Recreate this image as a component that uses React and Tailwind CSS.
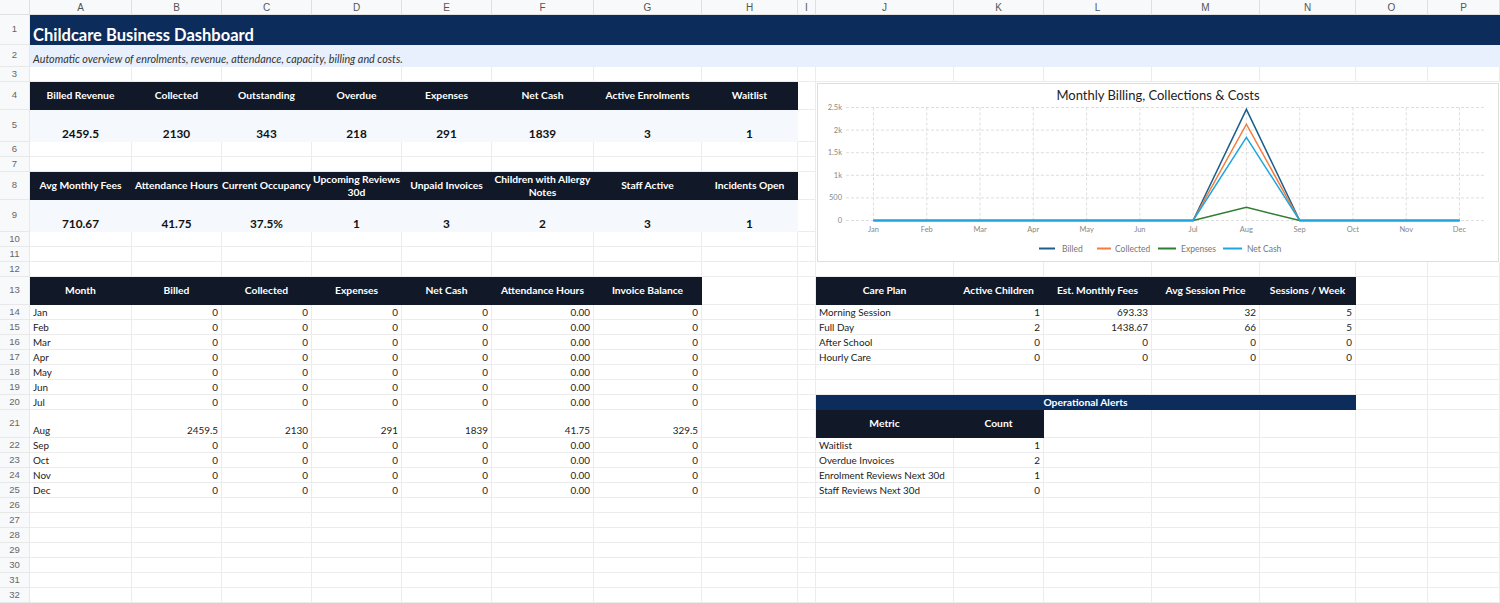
const ROW_COUNT = 32;
const LETTERS = 'ABCDEFGHIJKLMNOP'.split('');

const kpiTop = [
  ['Billed Revenue', '2459.5'],
  ['Collected', '2130'],
  ['Outstanding', '343'],
  ['Overdue', '218'],
  ['Expenses', '291'],
  ['Net Cash', '1839'],
  ['Active Enrolments', '3'],
  ['Waitlist', '1'],
];

const kpiBottom = [
  ['Avg Monthly Fees', '710.67'],
  ['Attendance Hours', '41.75'],
  ['Current Occupancy', '37.5%'],
  ['Upcoming Reviews\n30d', '1'],
  ['Unpaid Invoices', '3'],
  ['Children with Allergy\nNotes', '2'],
  ['Staff Active', '3'],
  ['Incidents Open', '1'],
];

const months = ['Jan', 'Feb', 'Mar', 'Apr', 'May', 'Jun', 'Jul', 'Aug', 'Sep', 'Oct', 'Nov', 'Dec'];
const monthly = months.map((m) =>
  m === 'Aug' ? [m, '2459.5', '2130', '291', '1839', '41.75', '329.5'] : [m, '0', '0', '0', '0', '0.00', '0']
);

const carePlans = [
  ['Morning Session', '1', '693.33', '32', '5'],
  ['Full Day', '2', '1438.67', '66', '5'],
  ['After School', '0', '0', '0', '0'],
  ['Hourly Care', '0', '0', '0', '0'],
];

const alerts = [
  ['Waitlist', '1'],
  ['Overdue Invoices', '2'],
  ['Enrolment Reviews Next 30d', '1'],
  ['Staff Reviews Next 30d', '0'],
];

const SPAN = { 1: '', 5: 'col-span-5', 16: 'col-span-16' };

// each cell style carries its own size, colour and alignment so no two utilities clash
const TEXT = 'border-[#ececec] px-[3px] text-[9.9px] text-[#222] items-end';
const NUM = TEXT + ' justify-end';
const HEAD = 'bg-[#111827] border-[#111827] text-white font-bold text-[10.3px] justify-center items-center text-center';
const KPI = 'bg-[#f5f8fc] border-[#f5f8fc] text-[#111] font-bold text-[11.8px] justify-center items-end pb-[1px]';

// sheet contents keyed "row-col" (col 1 = A)
function buildSheet() {
  const s = {};
  const put = (r, c, text, cls = TEXT, span = 1) => { s[`${r}-${c}`] = { text, cls, span }; };

  put(1, 1, 'Childcare Business Dashboard', 'bg-[#0c2d5c] border-[#0c2d5c] px-[3px] text-white font-bold text-[16.5px] items-end pb-[2px]', 16);
  put(2, 1, 'Automatic overview of enrolments, revenue, attendance, capacity, billing and costs.', 'bg-[#e8f0fe] border-[#e8f0fe] px-[3px] italic text-[10.8px] text-[#333] items-end pb-[1px]', 16);

  kpiTop.forEach(([h, v], i) => { put(4, i + 1, h, HEAD); put(5, i + 1, v, KPI); });
  kpiBottom.forEach(([h, v], i) => {
    put(8, i + 1, h, HEAD + (h.includes('\n') ? ' whitespace-pre leading-[12px]' : ''));
    put(9, i + 1, v, KPI);
  });

  ['Month', 'Billed', 'Collected', 'Expenses', 'Net Cash', 'Attendance Hours', 'Invoice Balance'].forEach((h, i) => put(13, i + 1, h, HEAD));
  monthly.forEach((row, ri) => row.forEach((v, ci) => put(14 + ri, ci + 1, v, ci === 0 ? TEXT : NUM)));

  ['Care Plan', 'Active Children', 'Est. Monthly Fees', 'Avg Session Price', 'Sessions / Week'].forEach((h, i) => put(13, 10 + i, h, HEAD));
  carePlans.forEach((row, ri) => row.forEach((v, ci) => put(14 + ri, 10 + ci, v, ci === 0 ? TEXT : NUM)));

  put(20, 10, 'Operational Alerts', 'bg-[#0c2d5c] border-[#0c2d5c] text-white font-bold text-[10.3px] justify-center items-center', 5);
  put(21, 10, 'Metric', HEAD);
  put(21, 11, 'Count', HEAD);
  alerts.forEach(([m, v], ri) => { put(22 + ri, 10, m); put(22 + ri, 11, v, NUM); });
  return s;
}

// the chart floats over rows 4-11, columns J-P
const underChart = (r, c) => r >= 4 && r <= 11 && c >= 10;

const CHART_SERIES = [
  { name: 'Billed', color: '#1d5f8a', value: 2459.5 },
  { name: 'Collected', color: '#f47b3c', value: 2130 },
  { name: 'Expenses', color: '#2e7d32', value: 291 },
  { name: 'Net Cash', color: '#1ea6e0', value: 1839 },
];

function Chart() {
  const x0 = 55.5;
  const step = 53.27;
  const yZero = 136.5;
  const yTop = 23.5;
  const toY = (v) => yZero - (v / 2500) * (yZero - yTop);
  const ticks = [['2.5k', 2500], ['2k', 2000], ['1.5k', 1500], ['1k', 1000], ['500', 500], ['0', 0]];
  const legend = [
    { x1: 221, x2: 237, tx: 244 },
    { x1: 279, x2: 293, tx: 297 },
    { x1: 340, x2: 358, tx: 363 },
    { x1: 405, x2: 424, tx: 429 },
  ];

  return (
    <svg width="682" height="177" viewBox="0 0 682 177" className="block font-[Lato,'Open_Sans',sans-serif]">
      <text x="340" y="16" textAnchor="middle" fontSize="13" fill="#222">Monthly Billing, Collections &amp; Costs</text>
      {ticks.map(([label, v]) => (
        <g key={label}>
          <line x1="28" x2="667" y1={toY(v)} y2={toY(v)} stroke="#d6d6d6" strokeWidth="0.8" strokeDasharray="3 2" />
          <text x="24" y={toY(v) + 2.5} textAnchor="end" fontSize="7.5" fill="#888">{label}</text>
        </g>
      ))}
      {months.map((m, i) => (
        <g key={m}>
          <line x1={x0 + i * step} x2={x0 + i * step} y1={yTop} y2={yZero} stroke="#d6d6d6" strokeWidth="0.8" strokeDasharray="3 2" />
          <text x={x0 + i * step} y="148" textAnchor="middle" fontSize="7.5" fill="#888">{m}</text>
        </g>
      ))}
      {CHART_SERIES.map((s) => {
        const pts = months.map((m, i) => `${x0 + i * step},${toY(m === 'Aug' ? s.value : 0)}`).join(' ');
        return <polyline key={s.name} points={pts} fill="none" stroke={s.color} strokeWidth="1.5" />;
      })}
      {CHART_SERIES.map((s, i) => (
        <g key={s.name}>
          <line x1={legend[i].x1} x2={legend[i].x2} y1="164.5" y2="164.5" stroke={s.color} strokeWidth="2" />
          <text x={legend[i].tx} y="167.5" fontSize="8.5" fill="#777">{s.name}</text>
        </g>
      ))}
    </svg>
  );
}

export default function App() {
  const sheet = buildSheet();
  const cells = [];

  cells.push(<div key="corner" className="bg-[#f8f9fa] border-r border-b border-[#e0e0e0]" />);
  LETTERS.forEach((l) => {
    cells.push(
      <div key={`h-${l}`} className="bg-[#f8f9fa] border-r border-b border-[#e0e0e0] flex items-center justify-center text-[10px] text-[#555] font-['Liberation_Sans',Arial,sans-serif]">
        {l}
      </div>
    );
  });

  for (let r = 1; r <= ROW_COUNT; r++) {
    cells.push(
      <div key={`n-${r}`} className="bg-[#f8f9fa] border-r border-b border-[#e8e8e8] flex items-center justify-center text-[9.5px] text-[#666] font-['Liberation_Sans',Arial,sans-serif]">
        {r}
      </div>
    );
    let c = 1;
    while (c <= 16) {
      if (underChart(r, c)) { c += 1; continue; }
      const cell = sheet[`${r}-${c}`] || { text: null, cls: TEXT, span: 1 };
      cells.push(
        <div key={`c-${r}-${c}`} className={`flex border-r border-b whitespace-nowrap leading-[13px] ${SPAN[cell.span]} ${cell.cls}`}>
          {cell.text}
        </div>
      );
      c += cell.span;
    }
  }

  return (
    <div className="w-[1500px] h-[603px] overflow-hidden bg-white font-[Lato,'Open_Sans',sans-serif]">
      <div className="grid grid-cols-[30px_102px_90px_90px_90px_90px_102px_108px_96px_18px_138px_90px_108px_108px_96px_72px_72px] grid-rows-[15px_30px_22px_15px_28px_32px_15px_15px_28px_32px_15px_15px_15px_28px_15px_15px_15px_15px_15px_15px_15px_28px_15px_15px_15px_15px_15px_15px_15px_15px_15px_15px_15px]">
        <div className="bg-white border border-[#dedede] row-start-5 row-end-13 col-start-11 col-end-18 mt-px ml-px mr-px overflow-hidden">
          <Chart />
        </div>
        {cells}
      </div>
    </div>
  );
}
